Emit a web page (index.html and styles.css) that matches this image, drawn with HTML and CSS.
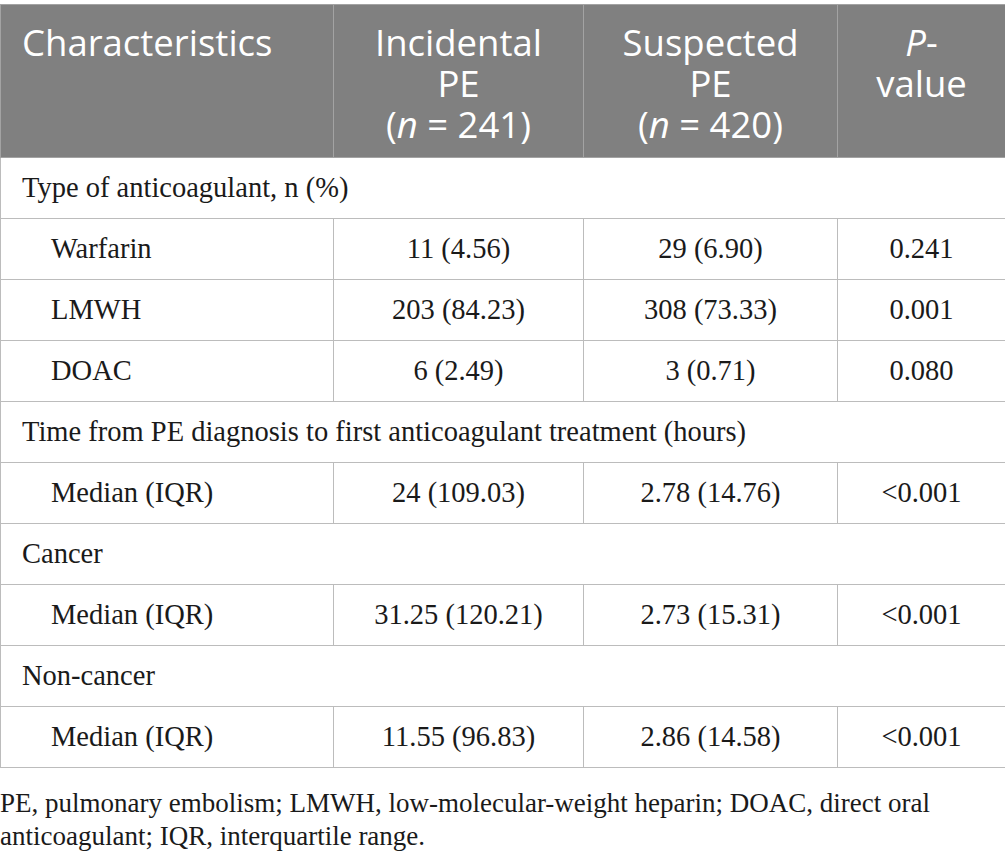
FILE: index.html
```html
<!DOCTYPE html>
<html>
<head>
<meta charset="utf-8">
<link rel="stylesheet" href="styles.css">
</head>
<body>
<div class="wrap">
<table class="data">
  <colgroup>
    <col class="c1"><col class="c2"><col class="c3"><col class="c4">
  </colgroup>
  <thead>
    <tr>
      <th class="left">Characteristics</th>
      <th>Incidental<br>PE<br>(<i>n</i> = 241)</th>
      <th>Suspected<br>PE<br>(<i>n</i> = 420)</th>
      <th><i>P</i>-<br>value</th>
    </tr>
  </thead>
  <tbody>
    <tr class="group"><td colspan="4">Type of anticoagulant, n (%)</td></tr>
    <tr><td class="sub">Warfarin</td><td>11 (4.56)</td><td>29 (6.90)</td><td>0.241</td></tr>
    <tr><td class="sub">LMWH</td><td>203 (84.23)</td><td>308 (73.33)</td><td>0.001</td></tr>
    <tr><td class="sub">DOAC</td><td>6 (2.49)</td><td>3 (0.71)</td><td>0.080</td></tr>
    <tr class="group"><td colspan="4">Time from PE diagnosis to first anticoagulant treatment (hours)</td></tr>
    <tr><td class="sub">Median (IQR)</td><td>24 (109.03)</td><td>2.78 (14.76)</td><td>&lt;0.001</td></tr>
    <tr class="group"><td colspan="4">Cancer</td></tr>
    <tr><td class="sub">Median (IQR)</td><td>31.25 (120.21)</td><td>2.73 (15.31)</td><td>&lt;0.001</td></tr>
    <tr class="group"><td colspan="4">Non-cancer</td></tr>
    <tr><td class="sub">Median (IQR)</td><td>11.55 (96.83)</td><td>2.86 (14.58)</td><td>&lt;0.001</td></tr>
  </tbody>
</table>
<p class="note">PE, pulmonary embolism; LMWH, low-molecular-weight heparin; DOAC, direct oral anticoagulant; IQR, interquartile range.</p>
</div>
</body>
</html>
```
FILE: styles.css
```css
html, body {
  margin: 0;
  padding: 0;
  background: #ffffff;
}
.wrap {
  padding-top: 4px;
  width: 1005px;
}
.data {
  width: 1005px;
  border-collapse: collapse;
  table-layout: fixed;
  font-family: "Liberation Serif", "Times New Roman", serif;
  font-size: 28.5px;
  color: #1a1a1a;
}
.c1 { width: 333px; }
.c2 { width: 250px; }
.c3 { width: 254px; }
.c4 { width: 168px; }
.data th {
  background: #808080;
  color: #ffffff;
  font-family: "Open Sans", "Noto Sans", sans-serif;
  font-weight: normal;
  font-size: 36.5px;
  line-height: 41px;
  text-align: center;
  vertical-align: top;
  padding: 17px 10px 12px;
  border: 1px solid #a3a3a3;
}
.data th.left {
  text-align: left;
  padding-left: 21px;
}
.data td {
  height: 61px;
  box-sizing: border-box;
  padding: 0 10px;
  text-align: center;
  vertical-align: middle;
  border: 1px solid #bcbcbc;
  line-height: 32px;
}
.data td.sub {
  text-align: left;
  padding-left: 50px;
}
.data tr.group td {
  text-align: left;
  padding-left: 21px;
}
.note {
  margin: 19px 0 0;
  font-family: "Liberation Serif", "Times New Roman", serif;
  font-size: 27px;
  line-height: 33px;
  color: #1a1a1a;
}
```
